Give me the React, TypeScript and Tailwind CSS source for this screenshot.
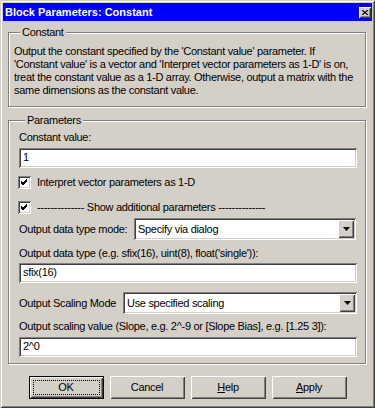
import React from "react";

const raised =
  "shadow-[inset_1px_1px_0_#fff,inset_-1px_-1px_0_#404040,inset_2px_2px_0_#d4d0c8,inset_-2px_-2px_0_#808080]";
const sunken =
  "shadow-[inset_1px_1px_0_#808080,inset_-1px_-1px_0_#fff,inset_2px_2px_0_#404040,inset_-2px_-2px_0_#d4d0c8]";
const etched = "border border-[#808080] shadow-[inset_1px_1px_0_#fff,1px_1px_0_#fff]";

const TextField: React.FC<{ value: string; className?: string }> = ({ value, className = "" }) => (
  <div className={`h-[20px] bg-white pl-[4px] pt-[3px] leading-[13px] ${sunken} ${className}`}>{value}</div>
);

const Check: React.FC<{ label: string; className?: string }> = ({ label, className = "" }) => (
  <div className={`flex items-center h-[13px] ${className}`}>
    <div className={`w-[13px] h-[13px] bg-white ml-[-1px] flex items-center justify-center ${sunken}`}>
      <svg width="7" height="7" viewBox="0 0 7 7">
        <path d="M0 2 L2 4 L6 0 M0 3 L2 5 L6 1 M0 4 L2 6 L6 2" stroke="#000" strokeWidth="1" fill="none" shapeRendering="crispEdges" />
      </svg>
    </div>
    <span className="ml-[6px] leading-[13px]">{label}</span>
  </div>
);

const Select: React.FC<{ value: string; className?: string }> = ({ value, className = "" }) => (
  <div className={`h-[22px] bg-white flex p-[2px] ${sunken} ${className}`}>
    <span className="flex-1 pl-[2px] leading-[18px]">{value}</span>
    <div className={`w-[16px] h-[18px] bg-[#d4d0c8] flex items-center justify-center ${raised}`}>
      <svg width="7" height="4" viewBox="0 0 7 4">
        <path d="M0 0 H7 L3.5 4 Z" fill="#000" />
      </svg>
    </div>
  </div>
);

const Btn: React.FC<{ children: React.ReactNode; isDefault?: boolean }> = ({ children, isDefault }) =>
  isDefault ? (
    <div className="w-[75px] h-[23px] border border-black">
      <div className={`w-full h-full p-[3px] ${raised}`}>
        <div className="w-full h-full border border-dotted border-black flex items-center justify-center leading-[13px]">
          {children}
        </div>
      </div>
    </div>
  ) : (
    <div className={`w-[75px] h-[23px] flex items-center justify-center leading-[13px] ${raised}`}>{children}</div>
  );

export default function App() {
  return (
    <div
      className={`w-[375px] h-[408px] bg-[#d4d0c8] p-[3px] text-black text-[11px] tracking-[-0.3px] font-[family-name:'Liberation_Sans',sans-serif] ${
        "shadow-[inset_1px_1px_0_#d4d0c8,inset_-1px_-1px_0_#404040,inset_2px_2px_0_#fff,inset_-2px_-2px_0_#808080]"
      }`}
    >
      <div className="h-[18px] bg-[#0000ff] flex items-center justify-between pl-[2px] pr-[1px]">
        <span className="text-white font-bold text-[11px] tracking-normal leading-[13px]">
          Block Parameters: Constant
        </span>
        <div className={`w-[12px] h-[11px] bg-[#d4d0c8] flex items-center justify-center ${raised}`}>
          <svg width="6" height="5" viewBox="0 0 6 5">
            <path d="M0 0 L6 5 M6 0 L0 5" stroke="#000" strokeWidth="1.2" />
          </svg>
        </div>
      </div>

      <fieldset className={`mt-[5px] ml-[5px] mr-[6px] pl-[5px] pt-[6px] pb-[9px] ${etched}`}>
        <legend className="ml-[6px] px-[2px] bg-[#d4d0c8] leading-[13px]">Constant</legend>
        <div className="leading-[13px] whitespace-nowrap">
          <div>Output the constant specified by the 'Constant value' parameter. If</div>
          <div>'Constant value' is a vector and 'Interpret vector parameters as 1-D' is on,</div>
          <div>treat the constant value as a 1-D array. Otherwise, output a matrix with the</div>
          <div>same dimensions as the constant value.</div>
        </div>
      </fieldset>

      <fieldset className={`mt-[7px] ml-[5px] mr-[6px] pl-[10px] pr-[8px] pt-[3px] pb-[6px] ${etched}`}>
        <legend className="ml-[6px] px-[2px] bg-[#d4d0c8] leading-[13px]">Parameters</legend>
        <div className="flex flex-col">
          <div className="h-[14px] leading-[14px]">Constant value:</div>
          <TextField value="1" className="mt-[4px]" />
          <Check label="Interpret vector parameters as 1-D" className="mt-[8px]" />
          <Check label="-------------- Show additional parameters --------------" className="mt-[12px]" />
          <div className="flex items-center mt-[4px]">
            <span className="w-[115px] whitespace-nowrap">Output data type mode:</span>
            <Select value="Specify via dialog" className="flex-1 mr-[1px]" />
          </div>
          <div className="h-[14px] leading-[14px] mt-[6px]">Output data type (e.g. sfix(16), uint(8), float('single')):</div>
          <TextField value="sfix(16)" className="mt-[3px]" />
          <div className="flex items-center mt-[9px]">
            <span className="w-[104px] whitespace-nowrap">Output Scaling Mode</span>
            <Select value="Use specified scaling" className="flex-1" />
          </div>
          <div className="h-[14px] leading-[14px] mt-[5px]">
            Output scaling value (Slope, e.g. 2^-9 or [Slope Bias], e.g. [1.25 3]):
          </div>
          <TextField value="2^0" className="mt-[4px]" />
        </div>
      </fieldset>

      <div className="flex justify-center gap-[6px] mt-[12px]">
        <Btn isDefault>OK</Btn>
        <Btn>Cancel</Btn>
        <Btn>
          <span className="underline">H</span>elp
        </Btn>
        <Btn>
          <span className="underline">A</span>pply
        </Btn>
      </div>
    </div>
  );
}
